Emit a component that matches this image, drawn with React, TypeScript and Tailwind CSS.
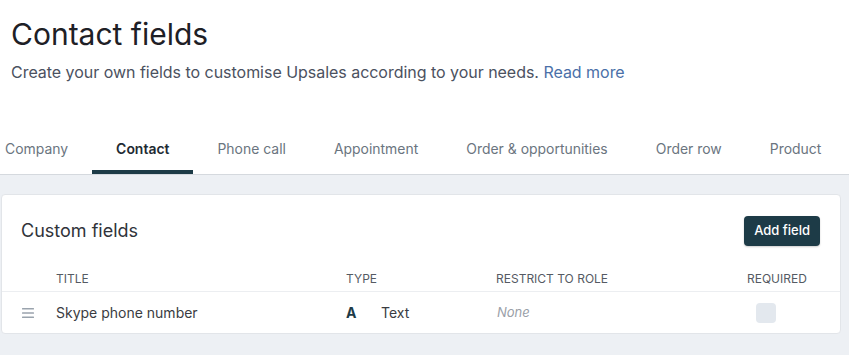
const tabs = ['Company', 'Contact', 'Phone call', 'Appointment', 'Order & opportunities', 'Order row', 'Product']

function DragHandle() {
  return (
    <svg width="12" height="10" viewBox="0 0 12 10" className="text-[#9aa3ad]">
      <rect x="0" y="0" width="12" height="1.6" rx="0.5" fill="currentColor" />
      <rect x="0" y="4.2" width="12" height="1.6" rx="0.5" fill="currentColor" />
      <rect x="0" y="8.4" width="12" height="1.6" rx="0.5" fill="currentColor" />
    </svg>
  )
}

export default function App() {
  return (
    <div className="w-[849px] h-[355px] overflow-hidden bg-white font-['Inter',sans-serif]">
      {/* Page header */}
      <div className="px-[11px] pt-[16px]">
        <h1 className="text-[30px] leading-[36px] text-[#1e2026] font-normal">Contact fields</h1>
        <p className="mt-[8px] text-[16px] leading-[24px] text-[#4b5160] tracking-[-0.03px]">
          Create your own fields to customise Upsales according to your needs.{' '}
          <a className="text-[#4a70a8]">Read more</a>
        </p>
      </div>

      {/* Tabs */}
      <div className="mt-[41px] border-b border-[#d5d9de]">
        <div className="flex ml-[-19px]">
          {tabs.map((t) => {
            const active = t === 'Contact'
            return (
              <div
                key={t}
                className={
                  active
                    ? 'px-[24px] pt-[14px] pb-[11px] text-[13.95px] leading-5 font-semibold text-[#1e2a33] border-b-4 border-[#1d3b47] whitespace-nowrap'
                    : 'px-[24px] pt-[14px] pb-[11px] text-[13.95px] leading-5 text-[#6b7580] border-b-4 border-transparent whitespace-nowrap'
                }
              >
                {t}
              </div>
            )
          })}
        </div>
      </div>

      {/* Content */}
      <div className="bg-[#edf0f4] h-full pt-[19px] pl-[1px] pr-[8px]">
        <div className="bg-white border border-[#e2e5e9] rounded-[4px]">
          <div className="flex items-center justify-between pt-[21px] pl-[19px] pr-[20px]">
            <h2 className="text-[18px] leading-[30px] text-[#30333a]">Custom fields</h2>
            <button className="h-[30px] px-[10px] rounded-[4px] bg-[#1d3b47] text-white text-[13px] font-medium shadow-[0_1px_2px_rgba(0,0,0,0.2)]">
              Add field
            </button>
          </div>

          <div className="grid grid-cols-[54px_290px_150px_251px_1fr] pt-[25px] pb-[4px] border-b border-[#eceef1] text-[12px] leading-4 text-[#555a63] uppercase">
            <div />
            <div>Title</div>
            <div>Type</div>
            <div>Restrict to role</div>
            <div>Required</div>
          </div>

          <div className="grid grid-cols-[54px_290px_150px_251px_1fr] items-center h-[41px] text-[14px] text-[#3a3c42]">
            <div className="pl-[20px] flex items-center">
              <DragHandle />
            </div>
            <div>Skype phone number</div>
            <div className="flex items-center">
              <span className="font-bold text-[#1d3b47] w-[35px]">A</span>
              <span>Text</span>
            </div>
            <div className="italic text-[13px] text-[#9aa0a8] pl-[1px]">None</div>
            <div className="pl-[9px]">
              <div className="w-[20px] h-[20px] rounded-[4px] bg-[#e3e8ee]" />
            </div>
          </div>
        </div>
      </div>
    </div>
  )
}
